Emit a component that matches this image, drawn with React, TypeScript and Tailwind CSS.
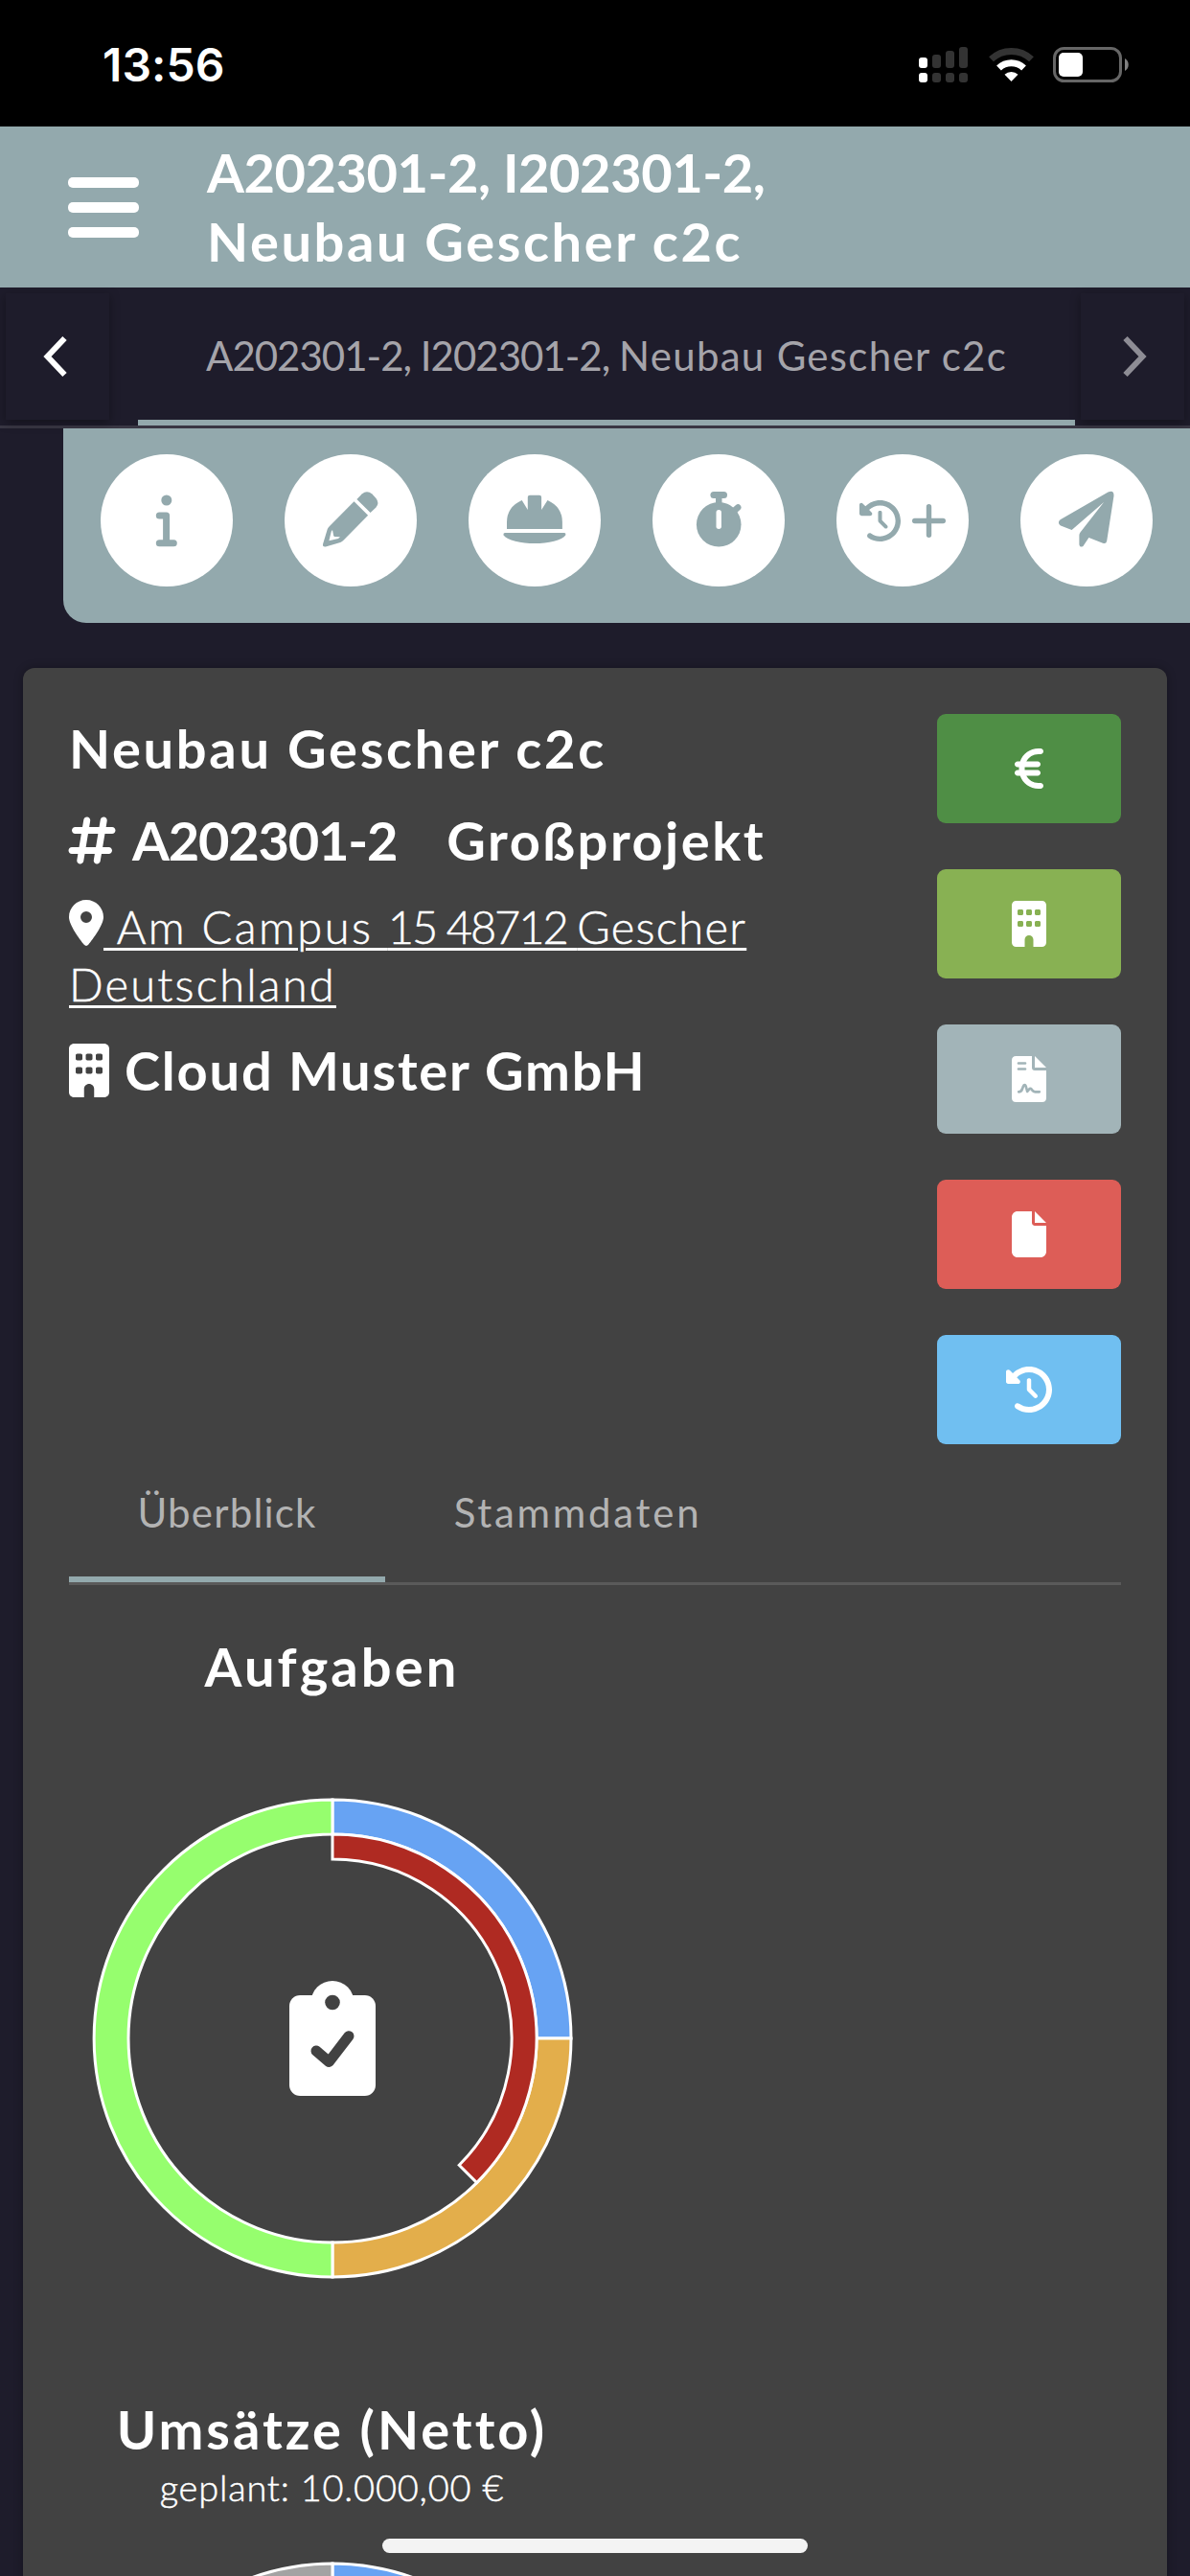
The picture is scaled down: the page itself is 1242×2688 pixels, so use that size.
import React from "react";
import {
  FaClockRotateLeft,
  FaHashtag,
  FaLocationDot,
  FaBuilding,
  FaEuroSign,
  FaFile,
} from "react-icons/fa6";

function point(cx: number, cy: number, r: number, deg: number) {
  const a = ((deg - 90) * Math.PI) / 180;
  return `${(cx + r * Math.cos(a)).toFixed(2)} ${(cy + r * Math.sin(a)).toFixed(2)}`;
}

function Segment({ from, to, outer, inner, fill }: { from: number; to: number; outer: number; inner: number; fill: string }) {
  const c = 252;
  const large = to - from > 180 ? 1 : 0;
  return (
    <path
      d={`M${point(c, c, outer, from)}A${outer} ${outer} 0 ${large} 1 ${point(c, c, outer, to)}L${point(c, c, inner, to)}A${inner} ${inner} 0 ${large} 0 ${point(c, c, inner, from)}Z`}
      fill={fill}
      stroke="#fff"
      strokeWidth="3"
    />
  );
}

function StatusBar() {
  return (
    <div className="flex h-[132px] shrink-0 items-start justify-between bg-black pl-[107px] pr-[62px]">
      <div className="mt-[39px] font-[Inter] text-[48px] font-semibold leading-[58px] tracking-[0.1px] text-white">13:56</div>
      <div className="mt-[49px] flex h-[38px] items-start">
        <svg width="52" height="38" className="mr-[21px]">
          <g fill="#333">
            <rect x="14" y="8" width="9" height="14" rx="3" />
            <rect x="28" y="4" width="9" height="18" rx="3" />
            <rect x="42" y="0" width="9" height="22" rx="3" />
            <rect x="14" y="27" width="9" height="10" rx="3" />
            <rect x="28" y="27" width="9" height="10" rx="3" />
            <rect x="42" y="27" width="9" height="10" rx="3" />
          </g>
          <rect x="0" y="11" width="9" height="11" rx="3" fill="#fff" />
          <rect x="0" y="27" width="9" height="10" rx="3" fill="#fff" />
        </svg>
        <svg width="48" height="38" viewBox="0 0 48 38" className="mr-[19px]">
          <path d="M2.500 12.8A30.500 30.500 0 0 1 44.500 12.8" fill="none" stroke="#333" strokeWidth="7" />
          <path d="M10.5 22A19 19 0 0 1 36.5 22" fill="none" stroke="#fff" strokeWidth="7" />
          <path d="M23.5 36L16.5 28.8A10 10 0 0 1 30.5 28.8Z" fill="#fff" />
        </svg>
        <svg width="81" height="38">
          <rect x="1.5" y="1.5" width="69" height="34" rx="10" fill="none" stroke="#666" strokeWidth="3" />
          <rect x="6" y="6" width="25" height="25" rx="5" fill="#fff" />
          <path d="M75 12C80 14.5 80 22.500 75 25Z" fill="#808080" />
        </svg>
      </div>
    </div>
  );
}

function InfoIcon() {
  return (
    <svg width="138" height="138" viewBox="0 0 138 138">
      <circle cx="68.8" cy="48" r="5.5" fill="currentColor" />
      <path d="M61.3 64H68.600V92.700M61.3 92.700H76.300" fill="none" stroke="currentColor" strokeWidth="7" strokeLinecap="round" strokeLinejoin="round" />
    </svg>
  );
}

function PencilIcon() {
  return (
    <svg width="138" height="138" viewBox="0 0 138 138" fill="currentColor">
      <path d="M75.4 47L80.7 41.600Q86 36.800 91.400 41.600L95.500 46Q99.400 51 95.400 55.500L89.600 61Z" />
      <path fillRule="evenodd" d="M72.500 49.300L87.100 63.700L61 90.300Q59.600 91.600 58.200 92L42.900 96.400Q39.200 96.800 40.100 93.500L44.800 78Q45.500 76.300 47 75ZM50 79L48.800 80.500L46.400 90.300L56 88L58 86.300L52.200 85.900Q51.200 85.700 51.200 85Z" />
    </svg>
  );
}

function HelmetIcon() {
  return (
    <svg width="138" height="138" viewBox="0 0 138 138" fill="currentColor">
      <path d="M64 42.700h10q2.100 0 2.100 2.100V58L82.500 48Q97.900 55 97.900 71V78H40V71Q40 55 55.700 48L61.800 58V44.800q0-2.100 2.200-2.100Z" />
      <path d="M38 82H100Q101.600 82 101.400 84.200C98 90 83 93 69 93S40 90 36.400 84.200Q36.300 82 38 82Z" />
    </svg>
  );
}

function StopwatchIcon() {
  return (
    <svg width="138" height="138" viewBox="0 0 138 138">
      <rect x="60.4" y="39" width="17.600" height="7" rx="3.500" fill="currentColor" />
      <rect x="66" y="43" width="6.500" height="10" fill="currentColor" />
      <circle cx="69.200" cy="73.300" r="23.300" fill="currentColor" />
      <path d="M83.500 60.500L89.200 55.500" stroke="currentColor" strokeWidth="6.500" strokeLinecap="round" />
      <rect x="66.500" y="58" width="5.400" height="20" rx="2.700" fill="#fff" />
    </svg>
  );
}

function PlusIcon() {
  return (
    <svg width="35" height="35" viewBox="0 0 35 35" className="ml-[12px]">
      <path d="M2.700 17.500H32.300M17.500 2.700V32.300" stroke="currentColor" strokeWidth="5.400" strokeLinecap="round" />
    </svg>
  );
}

function PlaneIcon() {
  return (
    <svg width="138" height="138" viewBox="0 0 138 138" fill="currentColor">
      <path d="M91.500 39.500Q97.800 36.600 97.500 43.500L90.200 90.500Q89.500 94 86 92.700L71.400 87L65.900 95.200C64.500 97.600 61.400 96.800 61.400 94V84.500Q61.400 83 62.500 81.500L87.100 50L53.600 79L42 74.400C39.400 73 39.300 69.600 42 68Z" />
    </svg>
  );
}

function ContractIcon() {
  return (
    <svg width="36" height="48" viewBox="0 0 36 48">
      <path d="M4.500 0H21V12Q21 15 24 15H36V43.500Q36 48 31.500 48H4.500Q0 48 0 43.500V4.500Q0 0 4.500 0Z" fill="#fff" />
      <path d="M24 0L36 12H24Z" fill="#fff" />
      <path
        d="M7 7.500H14M7 13.500H14M7.200 37.300C10.500 37.300 10.800 35 12 31.500C12.800 29.500 14 29.500 14.700 31.500L16.200 37L18.300 34.300Q19.300 33.200 20.500 34.500L22 36.300Q23 37.300 24.500 37.300H28.800"
        fill="none"
        stroke="#a2b4b8"
        strokeWidth="2.700"
        strokeLinecap="round"
        strokeLinejoin="round"
      />
    </svg>
  );
}

function ClipboardIcon() {
  return (
    <svg width="90" height="120" viewBox="0 0 90 120">
      <rect y="15" width="90" height="105" rx="11.250" fill="#fff" />
      <circle cx="45" cy="22.500" r="22.500" fill="#fff" />
      <circle cx="45" cy="22.500" r="7.800" fill="#424242" />
      <path d="M28 73L41.400 84.500L62 57.700" fill="none" stroke="#424242" strokeWidth="11" strokeLinecap="round" strokeLinejoin="round" />
    </svg>
  );
}

function ToolButton({ children }: { children: React.ReactNode }) {
  return <button className="flex size-[138px] shrink-0 items-center justify-center rounded-full bg-white text-[#93a9ad]">{children}</button>;
}

function ActionButton({ children, className }: { children: React.ReactNode; className: string }) {
  return <button className={`flex h-[114px] w-[192px] items-center justify-center rounded-[9px] text-white ${className}`}>{children}</button>;
}

export default function App() {
  return (
    <div className="relative flex h-[2688px] w-[1242px] flex-col overflow-hidden bg-[#1e1c2b] font-[Lato,sans-serif]">
      <StatusBar />

      <header className="flex h-[168px] shrink-0 items-center bg-[#93a9ad] pl-[71px]">
        <div className="flex flex-col gap-[15px]">
          <span className="h-[11px] w-[74px] rounded-[5px] bg-white" />
          <span className="h-[11px] w-[74px] rounded-[5px] bg-white" />
          <span className="h-[11px] w-[74px] rounded-[5px] bg-white" />
        </div>
        <h1 className="ml-[71px] whitespace-nowrap text-[56px] font-bold leading-[72px] text-white">
          <span className="block tracking-[-0.45px]">A202301-2, I202301-2,</span>
          <span className="block tracking-[2.6px]">Neubau Gescher c2c</span>
        </h1>
      </header>

      <nav className="flex h-[147px] shrink-0 border-b-[3px] border-[#393744]">
        <button className="ml-[6px] mt-[6px] flex h-[132px] w-[108px] items-center justify-center shadow-[0_3px_10px_rgba(0,0,0,0.35)]">
          <svg width="26" height="44" viewBox="0 0 26 44" fill="none" stroke="#fff" strokeWidth="6" className="-mt-[1px] mr-[4px]">
            <path d="M22.500 3L4.500 22L22.500 41" />
          </svg>
        </button>
        <div className="ml-[30px] flex h-[144px] w-[978px] justify-center border-b-[6px] border-[#93a9ad] pt-[44px]">
          <span className="whitespace-pre text-[42px] leading-[54px] text-[#a5a4aa]">
            <span className="tracking-[-1px]">A202301-2, I202301-2, </span>
            <span className="tracking-[1.3px]">Neubau Gescher c2c</span>
          </span>
        </div>
        <button className="ml-[6px] mt-[6px] flex h-[132px] w-[108px] items-center justify-center shadow-[0_3px_10px_rgba(0,0,0,0.35)]">
          <svg width="26" height="44" viewBox="0 0 26 44" fill="none" stroke="#8e8d95" strokeWidth="6" className="-mt-[1px] ml-[4px]">
            <path d="M3.500 3L21.500 22L3.500 41" />
          </svg>
        </button>
      </nav>

      <div className="ml-[66px] flex h-[203px] shrink-0 gap-[54px] rounded-bl-[24px] bg-[#93a9ad] pl-[39px] pt-[27px]">
        <ToolButton><InfoIcon /></ToolButton>
        <ToolButton><PencilIcon /></ToolButton>
        <ToolButton><HelmetIcon /></ToolButton>
        <ToolButton><StopwatchIcon /></ToolButton>
        <ToolButton>
          <FaClockRotateLeft size={43} />
          <PlusIcon />
        </ToolButton>
        <ToolButton><PlaneIcon /></ToolButton>
      </div>

      <main className="mx-[24px] mt-[47px] flex h-[2100px] shrink-0 flex-col rounded-[12px] bg-[#424242] px-[48px] pt-[48px] text-white shadow-[0_0_10px_rgba(0,0,0,0.3)]">
        <div className="flex h-[762px] justify-between">
          <div className="flex flex-col whitespace-nowrap">
            <h2 className="h-[72px] text-[56px] font-bold leading-[72px] tracking-[2.700px]">Neubau Gescher c2c</h2>
            <div className="mt-[24px] flex h-[72px] items-center text-[56px] font-bold leading-[72px]">
              <FaHashtag size={56} className="-ml-[4px]" />
              <span className="ml-[14px] tracking-[-1.2px]">A202301-2</span>
              <span className="ml-[52px] tracking-[2.5px]">Großprojekt</span>
            </div>
            <div className="mt-[24px] text-[47px] font-light leading-[60px] [-webkit-text-stroke:0.5px_white]">
              <div className="flex h-[60px]">
                <FaLocationDot size={48} className="-ml-[6px] -mr-[6px] mt-[2px]" />
                <span className="whitespace-pre underline decoration-[3px] underline-offset-[4px]">
                  <span className="tracking-[2.500px]"> Am Campus </span>
                  <span className="tracking-[-2.1px]">15 48712 </span>
                  <span className="tracking-[1.3px]">Gescher</span>
                </span>
              </div>
              <div><span className="tracking-[2.2px] underline decoration-[3px] underline-offset-[4px]">Deutschland</span></div>
            </div>
            <div className="mt-[24px] flex h-[72px] items-center text-[56px] font-bold leading-[72px]">
              <FaBuilding size={56} className="-ml-[7px]" />
              <span className="ml-[9px] tracking-[1.8px]">Cloud Muster GmbH</span>
            </div>
          </div>
          <div className="flex flex-col gap-[48px]">
            <ActionButton className="bg-[#4f8e45]"><FaEuroSign size={48} /></ActionButton>
            <ActionButton className="bg-[#88b153]"><FaBuilding size={48} /></ActionButton>
            <ActionButton className="bg-[#a2b4b8]"><ContractIcon /></ActionButton>
            <ActionButton className="bg-[#dd5d57]"><FaFile size={48} /></ActionButton>
            <ActionButton className="bg-[#70bff1]"><FaClockRotateLeft size={48} /></ActionButton>
          </div>
        </div>

        <div className="flex h-[147px] border-b-[3px] border-[#5a5a5a] text-[42px] leading-[54px] text-[#b3b3b3]">
          <div className="flex h-[144px] w-[330px] justify-center border-b-[6px] border-[#93a9ad] pt-[44px] tracking-[1.2px]">Überblick</div>
          <div className="flex w-[402px] justify-center pt-[44px] tracking-[2.7px]">Stammdaten</div>
        </div>

        <section className="flex w-[549px] flex-col items-center">
          <h3 className="mt-[49px] h-[72px] text-[56px] font-bold leading-[72px] tracking-[3.1px]">Aufgaben</h3>
          <div className="relative mt-[100px] size-[504px]">
            <svg width="504" height="504">
              <Segment from={0} to={90} outer={249} inner={213} fill="#67a3f3" />
              <Segment from={90} to={180} outer={249} inner={213} fill="#e3ae4b" />
              <Segment from={180} to={360} outer={249} inner={213} fill="#96fe6e" />
              <Segment from={0} to={135} outer={213} inner={187} fill="#af2a22" />
            </svg>
            <div className="absolute inset-0 flex items-center justify-center">
              <ClipboardIcon />
            </div>
          </div>
        </section>

        <section className="flex w-[549px] flex-col items-center whitespace-nowrap">
          <h3 className="mt-[120px] h-[72px] text-[56px] font-bold leading-[72px] tracking-[3px]">Umsätze (Netto)</h3>
          <p className="h-[48px] text-[38px] font-light leading-[48px] tracking-[0.8px] [-webkit-text-stroke:0.5px_white]">geplant: 10.000,00 €</p>
          <svg width="504" height="504" className="mt-[53px]">
            <Segment from={0} to={180} outer={249} inner={187} fill="#67a3f3" />
            <Segment from={180} to={360} outer={249} inner={187} fill="#a3a3a3" />
          </svg>
        </section>
      </main>

      <div className="absolute bottom-[24px] left-[399px] h-[15px] w-[444px] rounded-full bg-[#f3f3f3]" />
    </div>
  );
}
